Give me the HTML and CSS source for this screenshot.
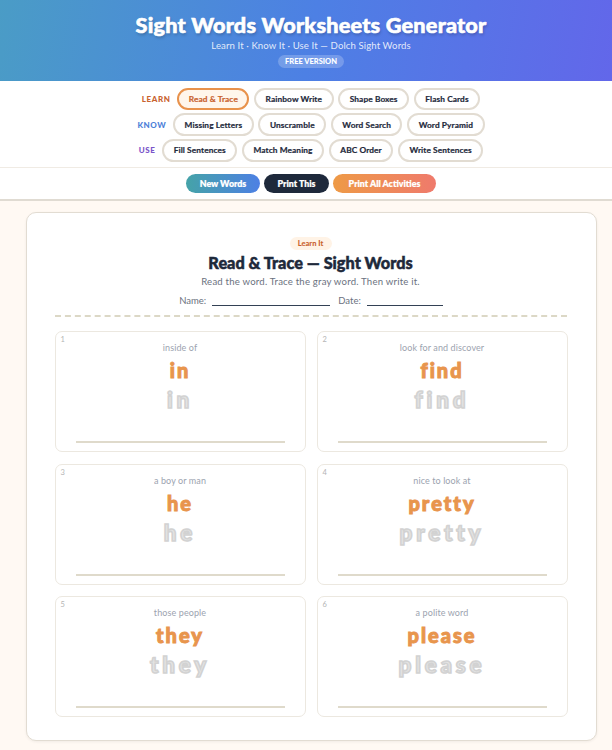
FILE: index.html
```
<!DOCTYPE html>
<html lang="en">
<head>
<meta charset="utf-8">
<title>Sight Words Worksheets Generator</title>
<link rel="stylesheet" href="styles.css">
</head>
<body>
<div class="app">
<header class="hero">
  <h1>Sight Words Worksheets Generator</h1>
  <p class="tagline">Learn It · Know It · Use It — Dolch Sight Words</p>
  <span class="free">FREE VERSION</span>
</header>
<nav class="tabs">
  <div class="tab-row">
    <span class="tab-label learn">LEARN</span>
    <button class="tab active">Read &amp; Trace</button>
    <button class="tab">Rainbow Write</button>
    <button class="tab">Shape Boxes</button>
    <button class="tab">Flash Cards</button>
  </div>
  <div class="tab-row">
    <span class="tab-label know">KNOW</span>
    <button class="tab">Missing Letters</button>
    <button class="tab">Unscramble</button>
    <button class="tab">Word Search</button>
    <button class="tab">Word Pyramid</button>
  </div>
  <div class="tab-row">
    <span class="tab-label use">USE</span>
    <button class="tab">Fill Sentences</button>
    <button class="tab">Match Meaning</button>
    <button class="tab">ABC Order</button>
    <button class="tab">Write Sentences</button>
  </div>
</nav>
<div class="actions">
  <button class="action new">New Words</button>
  <button class="action print">Print This</button>
  <button class="action all">Print All Activities</button>
</div>
<main class="page">
  <section class="sheet">
    <div class="sheet-head">
      <span class="pill">Learn It</span>
      <h2>Read &amp; Trace — Sight Words</h2>
      <p class="instr">Read the word. Trace the gray word. Then write it.</p>
      <div class="fields">
        <span class="field">Name:<i class="line name-line"></i></span>
        <span class="field">Date:<i class="line date-line"></i></span>
      </div>
    </div>
    <div class="grid">
      <article class="card"><span class="num">1</span><p class="hint">inside of</p><p class="word">in</p><p class="trace">in</p><div class="write"></div></article>
      <article class="card"><span class="num">2</span><p class="hint">look for and discover</p><p class="word">find</p><p class="trace">find</p><div class="write"></div></article>
      <article class="card"><span class="num">3</span><p class="hint">a boy or man</p><p class="word">he</p><p class="trace">he</p><div class="write"></div></article>
      <article class="card"><span class="num">4</span><p class="hint">nice to look at</p><p class="word">pretty</p><p class="trace">pretty</p><div class="write"></div></article>
      <article class="card"><span class="num">5</span><p class="hint">those people</p><p class="word">they</p><p class="trace">they</p><div class="write"></div></article>
      <article class="card"><span class="num">6</span><p class="hint">a polite word</p><p class="word">please</p><p class="trace">please</p><div class="write"></div></article>
    </div>
  </section>
</main>
</div>
</body>
</html>
```
FILE: styles.css
```
* { box-sizing: border-box; }
html, body { margin: 0; padding: 0; }
html { overflow: hidden; }
body { background: #fff9f3; font-family: "Lato", "Open Sans", sans-serif; color: #1e293b; height: 750px; overflow: hidden; }
.app { width: 622px; }
p, h1, h2 { margin: 0; }
.hero { height: 81px; background: linear-gradient(100deg, #4a9cc6 0%, #4d80e4 50%, #6366ea 100%); text-align: center; color: #fff; padding-top: 12px; }
.hero h1 { font-size: 21.7px; line-height: 26px; font-weight: 900; letter-spacing: 0.2px; -webkit-text-stroke: 0.6px #fff; text-shadow: 1px 2px 3px rgba(0,0,0,.22); }
.tagline { font-size: 9.6px; line-height: 12px; margin-top: 2px; color: rgba(255,255,255,.85); letter-spacing: .1px; }
.free { display: inline-block; margin-top: 3px; height: 13px; line-height: 13px; padding: 0 7px; background: rgba(255,255,255,.22); border-radius: 7px; font-size: 7.5px; font-weight: 900; vertical-align: top; }
.tabs { background: #fff; height: 87px; padding-top: 7px; border-bottom: 1px solid #f0ebe4; display: flex; flex-direction: column; gap: 3.7px; align-items: center; }
.tab-row { display: flex; align-items: center; gap: 4.7px; height: 22px; justify-content: center; }
.tab-label { font-size: 8px; font-weight: 900; letter-spacing: .6px; margin-right: 2px; }
.learn { color: #c9622f; }
.know { color: #4d80d8; }
.use { color: #7a55c9; }
.tab { height: 22.5px; padding: 0 9.5px; border: 2px solid #e2dcd2; border-radius: 12px; background: #fff; font: 700 8.3px "Lato", sans-serif; letter-spacing: .1px; -webkit-text-stroke: .2px currentColor; color: #1e293b; white-space: nowrap; }
.active { border-color: #e8924c; background: #fff6ec; color: #c9622f; }
.actions { background: #fff; display: flex; justify-content: center; align-items: center; gap: 4px; border-bottom: 2px solid #e0dbd2; height: 33px; padding-bottom: 1px; }
.action { height: 19px; border: 0; border-radius: 10px; color: #fff; font: 800 8.8px "Lato", sans-serif; -webkit-text-stroke: .15px #fff; padding: 0; }
.new { width: 74px; background: linear-gradient(90deg, #45a3a8, #4d80e4); }
.print { width: 65px; background: #1e293b; }
.all { width: 103px; background: linear-gradient(90deg, #ee9a46, #ef7a6c); }
.page { padding: 11px 0 0; }
.sheet { width: 571px; height: 529px; margin: 0 auto; background: #fff; border: 1px solid #e2dcd2; border-radius: 10px; padding: 24px 29px 0 28px; box-shadow: 0 1px 3px rgba(0,0,0,.06); }
.sheet-head { text-align: center; border-bottom: 2px dashed #dcd8c6; height: 80px; }
.pill { display: block; width: 42px; height: 13px; line-height: 13px; margin: 0 auto; background: #fff3e6; color: #c9622f; border-radius: 7px; font-size: 7.5px; font-weight: 900; }
.sheet-head h2 { font-size: 16.3px; line-height: 20px; font-weight: 900; margin-top: 3px; -webkit-text-stroke: .5px #1e293b; }
.instr { font-size: 9.6px; line-height: 13px; margin-top: 2px; color: #6b7280; letter-spacing: .2px; }
.fields { display: flex; justify-content: center; gap: 8px; margin-top: 7px; font-size: 9.5px; line-height: 12px; color: #6b7280; padding-left: 1px; }
.field { display: flex; align-items: flex-end; gap: 6px; }
.line { display: block; height: 1px; background: #334155; margin-bottom: 1px; }
.name-line { width: 118px; }
.date-line { width: 76px; }
.grid { display: grid; grid-template-columns: 251px 251px; gap: 11.5px 11px; margin-top: 14px; }
.card { position: relative; height: 121px; border: 1px solid #ece8e0; border-radius: 7px; padding-top: 10px; text-align: center; }
.num { position: absolute; left: 5px; top: 3px; font-size: 7.5px; color: #b4b4b4; }
.hint { font-size: 9px; line-height: 12px; color: #9ca3af; letter-spacing: .1px; }
.word { font-size: 20px; line-height: 24px; margin-top: 4px; font-weight: 900; color: #e8954d; letter-spacing: 2px; -webkit-text-stroke: 1px #e8954d; }
.trace { font-size: 22.5px; line-height: 26px; margin-top: 5px; font-weight: 900; color: #e4e4e4; letter-spacing: 3.8px; -webkit-text-stroke: 1.6px #d2d2d2; }
.write { position: absolute; left: 20px; right: 20px; bottom: 8px; height: 2px; background: #dfdacb; }
```
